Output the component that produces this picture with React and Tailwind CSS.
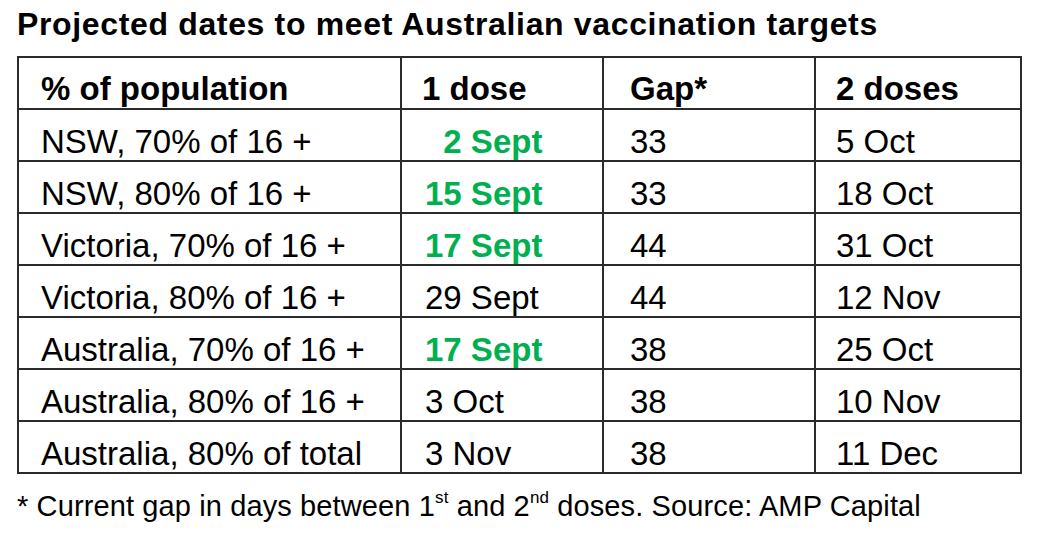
var ROWS = [
  { label: 'NSW, 70% of 16 +', first: '\u20072 Sept', green: true, gap: '33', second: '5 Oct' },
  { label: 'NSW, 80% of 16 +', first: '15 Sept', green: true, gap: '33', second: '18 Oct' },
  { label: 'Victoria, 70% of 16 +', first: '17 Sept', green: true, gap: '44', second: '31 Oct' },
  { label: 'Victoria, 80% of 16 +', first: '29 Sept', green: false, gap: '44', second: '12 Nov' },
  { label: 'Australia, 70% of 16 +', first: '17 Sept', green: true, gap: '38', second: '25 Oct' },
  { label: 'Australia, 80% of 16 +', first: '3 Oct', green: false, gap: '38', second: '10 Nov' },
  { label: 'Australia, 80% of total', first: '3 Nov', green: false, gap: '38', second: '11 Dec' },
]

var cell = 'h-[52px] border-r-2 border-b-2 border-[#2b2b2b] leading-[38px] whitespace-nowrap'

export default function App() {
  return (
    <div className="w-[1046px] h-[544px] bg-white text-black pl-[17px] font-['Liberation_Sans',Arial,sans-serif]">
      <h1 className="pt-[5px] text-[32px] leading-[38px] font-bold tracking-[0.65px]">
        Projected dates to meet Australian vaccination targets
      </h1>

      <div className="mt-[13px] w-[1005px] grid grid-cols-[383px_202px_212px_206px] border-l-2 border-t-2 border-[#2b2b2b] text-[33px]">
        <div className={cell + ' pt-[12px] pl-[22px] font-bold'}>% of population</div>
        <div className={cell + ' pt-[12px] pl-[20px] font-bold'}>1 dose</div>
        <div className={cell + ' pt-[12px] pl-[26px] font-bold'}>Gap*</div>
        <div className={cell + ' pt-[12px] pl-[20px] font-bold'}>2 doses</div>

        {ROWS.map(function (r) {
          return [
            <div key={r.label + 'a'} className={cell + ' pt-[13px] pl-[22px]'}>{r.label}</div>,
            <div key={r.label + 'b'} className={cell + ' pt-[13px] pl-[23px] ' + (r.green ? 'font-bold text-[#00b050]' : '')}>{r.first}</div>,
            <div key={r.label + 'c'} className={cell + ' pt-[13px] pl-[26px]'}>{r.gap}</div>,
            <div key={r.label + 'd'} className={cell + ' pt-[13px] pl-[20px]'}>{r.second}</div>,
          ]
        })}
      </div>

      <p className="mt-[15px] text-[29px] leading-[34px] tracking-[0.12px] whitespace-nowrap">
        * Current gap in days between 1<sup className="text-[17px] -top-[0.75em]">st</sup> and 2<sup className="text-[17px] -top-[0.75em]">nd</sup> doses. Source: AMP Capital
      </p>
    </div>
  )
}
